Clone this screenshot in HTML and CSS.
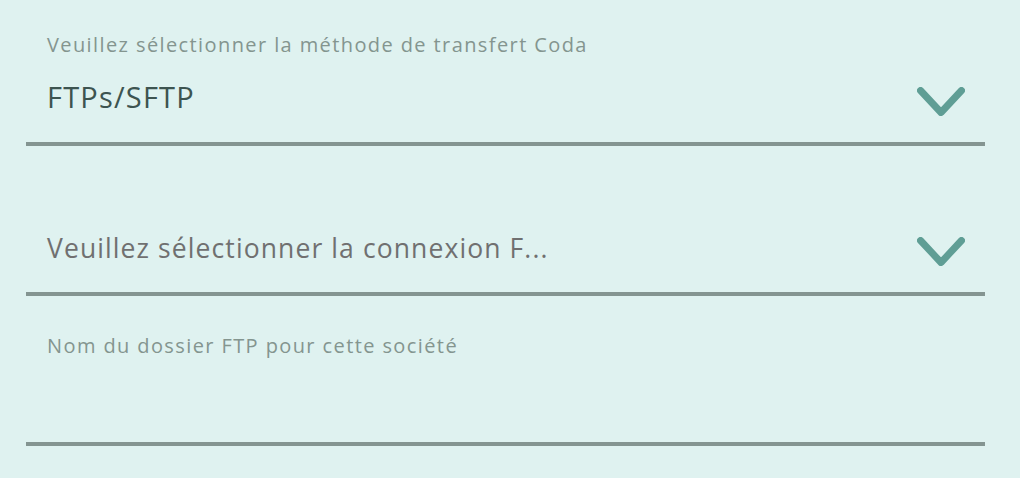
FILE: index.html
```html
<!DOCTYPE html>
<html lang="fr">
<head>
<meta charset="utf-8">
<link rel="stylesheet" href="styles.css">
</head>
<body>
<div class="form">
  <div class="field field-first">
    <div class="label">Veuillez sélectionner la méthode de transfert Coda</div>
    <div class="row row-value">
      <span class="value">FTPs/SFTP</span>
      <svg class="chev" width="48" height="29" viewBox="0 0 48 29"><polyline points="3.5,3.5 24,25.5 44.5,3.5" fill="none" stroke="#5f9e95" stroke-width="7" stroke-linecap="round" stroke-linejoin="round"/></svg>
    </div>
  </div>
  <div class="field field-second">
    <div class="row row-placeholder">
      <span class="placeholder">Veuillez sélectionner la connexion F...</span>
      <svg class="chev" width="48" height="29" viewBox="0 0 48 29"><polyline points="3.5,3.5 24,25.5 44.5,3.5" fill="none" stroke="#5f9e95" stroke-width="7" stroke-linecap="round" stroke-linejoin="round"/></svg>
    </div>
  </div>
  <div class="field field-third">
    <div class="label">Nom du dossier FTP pour cette société</div>
  </div>
</div>
</body>
</html>
```
FILE: styles.css
```css
html, body {
  margin: 0;
  padding: 0;
  background: #dff2f0;
  height: 100%;
}
body {
  font-family: "Open Sans", "Noto Sans", sans-serif;
}
.form {
  margin-left: 26px;
  width: 959px;
  display: flex;
  flex-direction: column;
}
.field {
  border-bottom: 4px solid #849591;
  display: flex;
  flex-direction: column;
  box-sizing: border-box;
  height: 150px;
}
.field-first {
  height: 146px;
  padding-top: 32px;
}
.field-second {
  padding-top: 82px;
}
.field-third {
  padding-top: 37px;
}
.label {
  padding-left: 21px;
  font-size: 20px;
  line-height: 26px;
  letter-spacing: 1.4px;
  color: #84958f;
}
.row {
  display: flex;
  align-items: flex-start;
  justify-content: space-between;
  padding-left: 21px;
  padding-right: 20px;
  height: 40px;
}
.row-value {
  margin-top: 19px;
}
.value {
  font-size: 29px;
  line-height: 40px;
  letter-spacing: 1.2px;
  color: #3d5450;
}
.placeholder {
  font-size: 26.5px;
  line-height: 40px;
  letter-spacing: 1.1px;
  color: #707070;
}
.chev {
  display: block;
  flex: none;
}
.row-value .chev {
  margin-top: 10px;
}
.row-placeholder .chev {
  margin-top: 9px;
}
```
